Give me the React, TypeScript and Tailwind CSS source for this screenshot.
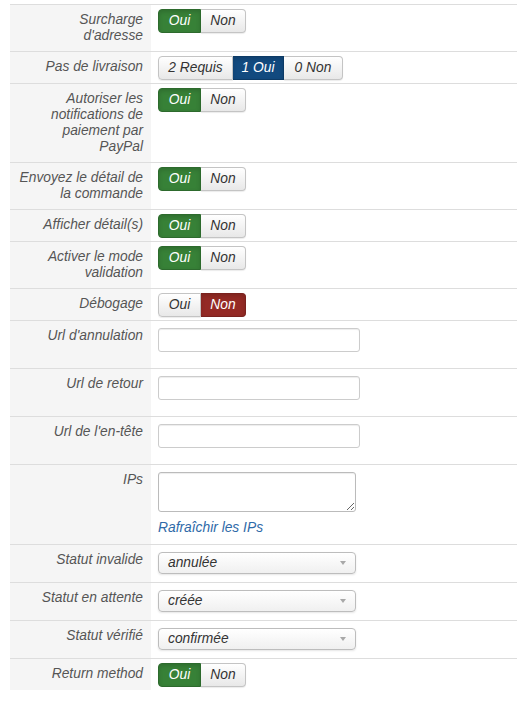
import React from "react";

type Opt = { label: string; w: number; active?: "green" | "red" | "blue" };

const activeBg: Record<string, string> = {
  green: "bg-[#378137] border-[#2d6a2d] text-white",
  red: "bg-[#942a25] border-[#7a221e] text-white",
  blue: "bg-[#124a7f] border-[#0d3b66] text-white",
};

function BtnGroup({ opts }: { opts: Opt[] }) {
  return (
    <div className="flex h-[24px]">
      {opts.map((o, i) => {
        const first = i === 0;
        const last = i === opts.length - 1;
        const cls = o.active
          ? activeBg[o.active] + " shadow-[inset_0_2px_4px_rgba(0,0,0,0.15)]"
          : "bg-gradient-to-b from-white to-[#e8e8e8] border-[#c4c4c4] text-[#333] shadow-[0_1px_1px_rgba(0,0,0,0.08)]";
        return (
          <div
            key={o.label}
            style={{ width: o.w }}
            className={
              "flex items-center justify-center border text-[13.8px] leading-none " +
              cls +
              (first ? " rounded-l-[4px]" : " border-l-0") +
              (last ? " rounded-r-[4px]" : "")
            }
          >
            {o.label}
          </div>
        );
      })}
    </div>
  );
}

function YesNo({ on = true }: { on?: boolean }) {
  return (
    <BtnGroup
      opts={[
        { label: "Oui", w: 43, active: on ? "green" : undefined },
        { label: "Non", w: 45, active: on ? undefined : "red" },
      ]}
    />
  );
}

function TextInput() {
  return (
    <div className="h-[24px] w-[202px] rounded-[3px] border border-[#ccc] bg-white shadow-[inset_0_1px_1px_rgba(0,0,0,0.075)]" />
  );
}

function Select({ value }: { value: string }) {
  return (
    <div className="flex h-[22px] w-[198px] items-center justify-between rounded-[4px] border border-[#bdbdbd] bg-gradient-to-b from-white to-[#f0f0f0] pl-[9px] pr-[9px] text-[13.8px] text-[#333] shadow-[0_1px_2px_rgba(0,0,0,0.1)]">
      <span>{value}</span>
      <svg width="6" height="4" viewBox="0 0 6 4">
        <path d="M0 0 L6 0 L3 4 Z" fill="#a8a8a8" />
      </svg>
    </div>
  );
}

type Row = {
  label: string[];
  kind: "btn" | "input" | "select" | "ips";
  content: React.ReactNode;
};

const rows: Row[] = [
  { label: ["Surcharge", "d'adresse"], kind: "btn", content: <YesNo /> },
  {
    label: ["Pas de livraison"],
    kind: "btn",
    content: (
      <BtnGroup
        opts={[
          { label: "2 Requis", w: 75 },
          { label: "1 Oui", w: 51, active: "blue" },
          { label: "0 Non", w: 59 },
        ]}
      />
    ),
  },
  {
    label: ["Autoriser les", "notifications de", "paiement par", "PayPal"],
    kind: "btn",
    content: <YesNo />,
  },
  { label: ["Envoyez le détail de", "la commande"], kind: "btn", content: <YesNo /> },
  { label: ["Afficher détail(s)"], kind: "btn", content: <YesNo /> },
  { label: ["Activer le mode", "validation"], kind: "btn", content: <YesNo /> },
  { label: ["Débogage"], kind: "btn", content: <YesNo on={false} /> },
  { label: ["Url d'annulation"], kind: "input", content: <TextInput /> },
  { label: ["Url de retour"], kind: "input", content: <TextInput /> },
  { label: ["Url de l'en-tête"], kind: "input", content: <TextInput /> },
  {
    label: ["IPs"],
    kind: "ips",
    content: (
      <div className="flex flex-col">
        <textarea
          className="block h-[40px] w-[198px] rounded-[3px] border border-[#bbb] bg-white shadow-[inset_0_1px_1px_rgba(0,0,0,0.075)] outline-none"
          readOnly
        />
        <a className="mt-[8px] block text-[13.8px] leading-[16px] text-[#2f6aa8]">
          Rafraîchir les IPs
        </a>
      </div>
    ),
  },
  { label: ["Statut invalide"], kind: "select", content: <Select value="annulée" /> },
  { label: ["Statut en attente"], kind: "select", content: <Select value="créée" /> },
  { label: ["Statut vérifié"], kind: "select", content: <Select value="confirmée" /> },
  { label: ["Return method"], kind: "btn", content: <YesNo /> },
];

const cellPad: Record<Row["kind"], string> = {
  btn: "pt-[4px] pb-[3px]",
  input: "pt-[7px] pb-[16px]",
  select: "pt-[7px] pb-[8px]",
  ips: "pt-[7px] pb-[8px]",
};

export default function App() {
  return (
    <div
      className="min-h-[701px] w-[518px] bg-white pt-[4px] italic"
      style={{ fontFamily: '"Liberation Sans", Arial, sans-serif' }}
    >
      <div className="ml-[10px] w-[507px]">
        {rows.map((r, i) => (
          <div key={i} className="flex border-t border-[#dddddd]">
            <div className="w-[141px] shrink-0 bg-[#f5f5f5] pb-[7px] pr-[8px] pt-[7px] text-right text-[13.8px] leading-[16px] text-[#555]">
              {r.label.map((l) => (
                <div key={l}>{l}</div>
              ))}
            </div>
            <div className={"flex-1 pl-[7px] " + cellPad[r.kind]}>{r.content}</div>
          </div>
        ))}
      </div>
    </div>
  );
}
